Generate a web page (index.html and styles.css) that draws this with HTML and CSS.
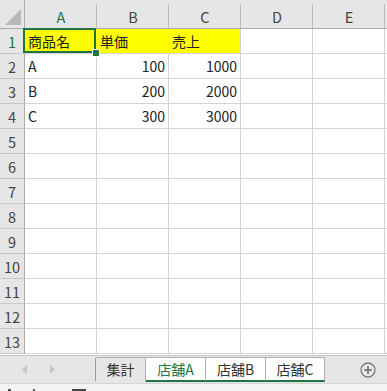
FILE: index.html
```html
<!DOCTYPE html>
<html lang="ja">
<head>
<meta charset="utf-8">
<link rel="stylesheet" href="styles.css">
</head>
<body>
<div class="app">
  <div class="grid">
    <div class="corner"><svg width="24" height="24" viewBox="0 0 24 24"><polygon points="5,21 21,21 21,5" fill="#b8b8b8"/></svg></div>
    <div class="ch sel">A</div><div class="ch">B</div><div class="ch">C</div><div class="ch">D</div><div class="ch">E</div><div class="ch rest"></div>

    <div class="rh sel">1</div>
    <div class="c y ya active">商品名<span class="box"></span><span class="handle"></span></div>
    <div class="c y ya">単価</div>
    <div class="c y">売上</div>
    <div class="c"></div><div class="c"></div><div class="c rest"></div>

    <div class="rh">2</div><div class="c">A</div><div class="c n">100</div><div class="c n">1000</div><div class="c"></div><div class="c"></div><div class="c rest"></div>
    <div class="rh">3</div><div class="c">B</div><div class="c n">200</div><div class="c n">2000</div><div class="c"></div><div class="c"></div><div class="c rest"></div>
    <div class="rh">4</div><div class="c">C</div><div class="c n">300</div><div class="c n">3000</div><div class="c"></div><div class="c"></div><div class="c rest"></div>
    <div class="rh">5</div><div class="c"></div><div class="c"></div><div class="c"></div><div class="c"></div><div class="c"></div><div class="c rest"></div>
    <div class="rh">6</div><div class="c"></div><div class="c"></div><div class="c"></div><div class="c"></div><div class="c"></div><div class="c rest"></div>
    <div class="rh">7</div><div class="c"></div><div class="c"></div><div class="c"></div><div class="c"></div><div class="c"></div><div class="c rest"></div>
    <div class="rh">8</div><div class="c"></div><div class="c"></div><div class="c"></div><div class="c"></div><div class="c"></div><div class="c rest"></div>
    <div class="rh">9</div><div class="c"></div><div class="c"></div><div class="c"></div><div class="c"></div><div class="c"></div><div class="c rest"></div>
    <div class="rh">10</div><div class="c"></div><div class="c"></div><div class="c"></div><div class="c"></div><div class="c"></div><div class="c rest"></div>
    <div class="rh">11</div><div class="c"></div><div class="c"></div><div class="c"></div><div class="c"></div><div class="c"></div><div class="c rest"></div>
    <div class="rh">12</div><div class="c"></div><div class="c"></div><div class="c"></div><div class="c"></div><div class="c"></div><div class="c rest"></div>
    <div class="rh">13</div><div class="c"></div><div class="c"></div><div class="c"></div><div class="c"></div><div class="c"></div><div class="c rest"></div>
  </div>

  <div class="tabbar">
    <div class="nav">
      <svg width="6" height="9" viewBox="0 0 6 9"><polygon points="5,0 5,9 0,4.5" fill="#c4c4c4"/></svg>
      <svg width="6" height="9" viewBox="0 0 6 9"><polygon points="0,0 0,9 5,4.5" fill="#c4c4c4"/></svg>
    </div>
    <div class="tabs">
      <div class="tab gray">集計</div>
      <div class="tab on cur">店舗A</div>
      <div class="tab on">店舗B</div>
      <div class="tab on last">店舗C</div>
    </div>
    <div class="add">
      <svg width="16" height="16" viewBox="0 0 16 16"><circle cx="8" cy="8" r="7" fill="none" stroke="#7a7a7a" stroke-width="1.3"/><path d="M8 4.2v7.6M4.2 8h7.6" stroke="#6a6a6a" stroke-width="1.6"/></svg>
    </div>
  </div>

  <div class="status">
    <span class="m m1"></span><span class="m m2"></span><span class="m m3"></span>
  </div>
</div>
</body>
</html>
```

FILE: styles.css
```css
* { box-sizing: border-box; }
html, body { margin: 0; padding: 0; }
body {
  width: 387px;
  height: 391px;
  overflow: hidden;
  background: #fff;
  font-family: "Noto Sans CJK JP", "Noto Sans", sans-serif;
  color: #222;
}
.app { width: 387px; height: 391px; display: flex; flex-direction: column; overflow: hidden; }

.grid {
  display: grid;
  grid-template-columns: 25px repeat(5, 72px) 1fr;
  grid-template-rows: 29px repeat(13, 25px);
  height: 355px;
  overflow: hidden;
}
.corner {
  background: #e6e6e6;
  border-right: 1px solid #ababab;
  border-bottom: 1px solid #ababab;
  padding-top: 4px;
}
.corner svg { display: block; }
.ch {
  background: #e6e6e6;
  border-bottom: 1px solid #ababab;
  position: relative;
  display: flex;
  align-items: center;
  justify-content: center;
  padding-top: 4px;
  font-size: 14.5px;
  color: #444;
}
.ch::after {
  content: "";
  position: absolute;
  right: 0; top: 4px; bottom: 0;
  width: 1px;
  background: #bcbcbc;
}
.ch.rest::after { display: none; }
.ch.sel { color: #217346; }
.rh {
  background: #e6e6e6;
  border-right: 1px solid #ababab;
  border-bottom: 1px solid #c8c8c8;
  display: flex;
  align-items: center;
  justify-content: center;
  font-size: 14.5px;
  color: #444;
}
.rh.sel { color: #217346; }
.c {
  border-right: 1px solid #d4d4d4;
  border-bottom: 1px solid #d4d4d4;
  font-size: 14px;
  line-height: 24px;
  padding: 0 3px 0 3px;
  white-space: nowrap;
  color: #222;
  position: relative;
}
.c.rest { border-right: none; }
.c.n { text-align: right; padding-right: 3px; }
.c.y { background: #ffff00; }
.c.ya { border-right-color: #ffff00; }
.box {
  position: absolute;
  left: -2px; top: -1px; right: 0; bottom: 0;
  border: 2px solid #217346;
}
.handle {
  position: absolute;
  right: -4px; bottom: -4px;
  width: 8px; height: 8px;
  background: #217346;
  border: 1px solid #fff;
  z-index: 2;
}

.tabbar {
  height: 28px;
  background: #e6e6e6;
  border-top: 1px solid #c6c6c6;
  display: flex;
  align-items: stretch;
}
.nav {
  width: 96px;
  display: flex;
  align-items: center;
  gap: 22px;
  padding-left: 22px;
  border-right: 1px solid #9a9a9a;
  margin: 2px 0 2px 0;
}
.nav svg { display: block; }
.tabs { display: flex; padding-top: 1px; padding-bottom: 1px; }
.tab {
  font-size: 14px;
  color: #333;
  display: flex;
  align-items: center;
  justify-content: center;
  border-right: 1px solid #b0b0b0;
  border-top: 1px solid #b0b0b0;
  padding-bottom: 2px;
}
.tab.gray { width: 50px; }
.tab.on { width: 60px; background: #fff; border-bottom: 2px solid #217346; padding-bottom: 0; }
.tab.last { width: 59px; }
.tab.cur { color: #217346; }
.add { flex: 1; display: flex; align-items: center; justify-content: flex-end; padding-right: 11px; }
.add svg { display: block; }

.status {
  flex: 1;
  background: #f3f3f3;
  border-top: 1px solid #d6d6d6;
  position: relative;
}
.m { position: absolute; background: #555; }
.m1 { left: 8px; top: 5px; width: 3px; height: 2px; }
.m2 { left: 33px; top: 5px; width: 2px; height: 2px; }
.m3 { left: 72px; top: 5px; width: 14px; height: 2px; background: #444; }
```
